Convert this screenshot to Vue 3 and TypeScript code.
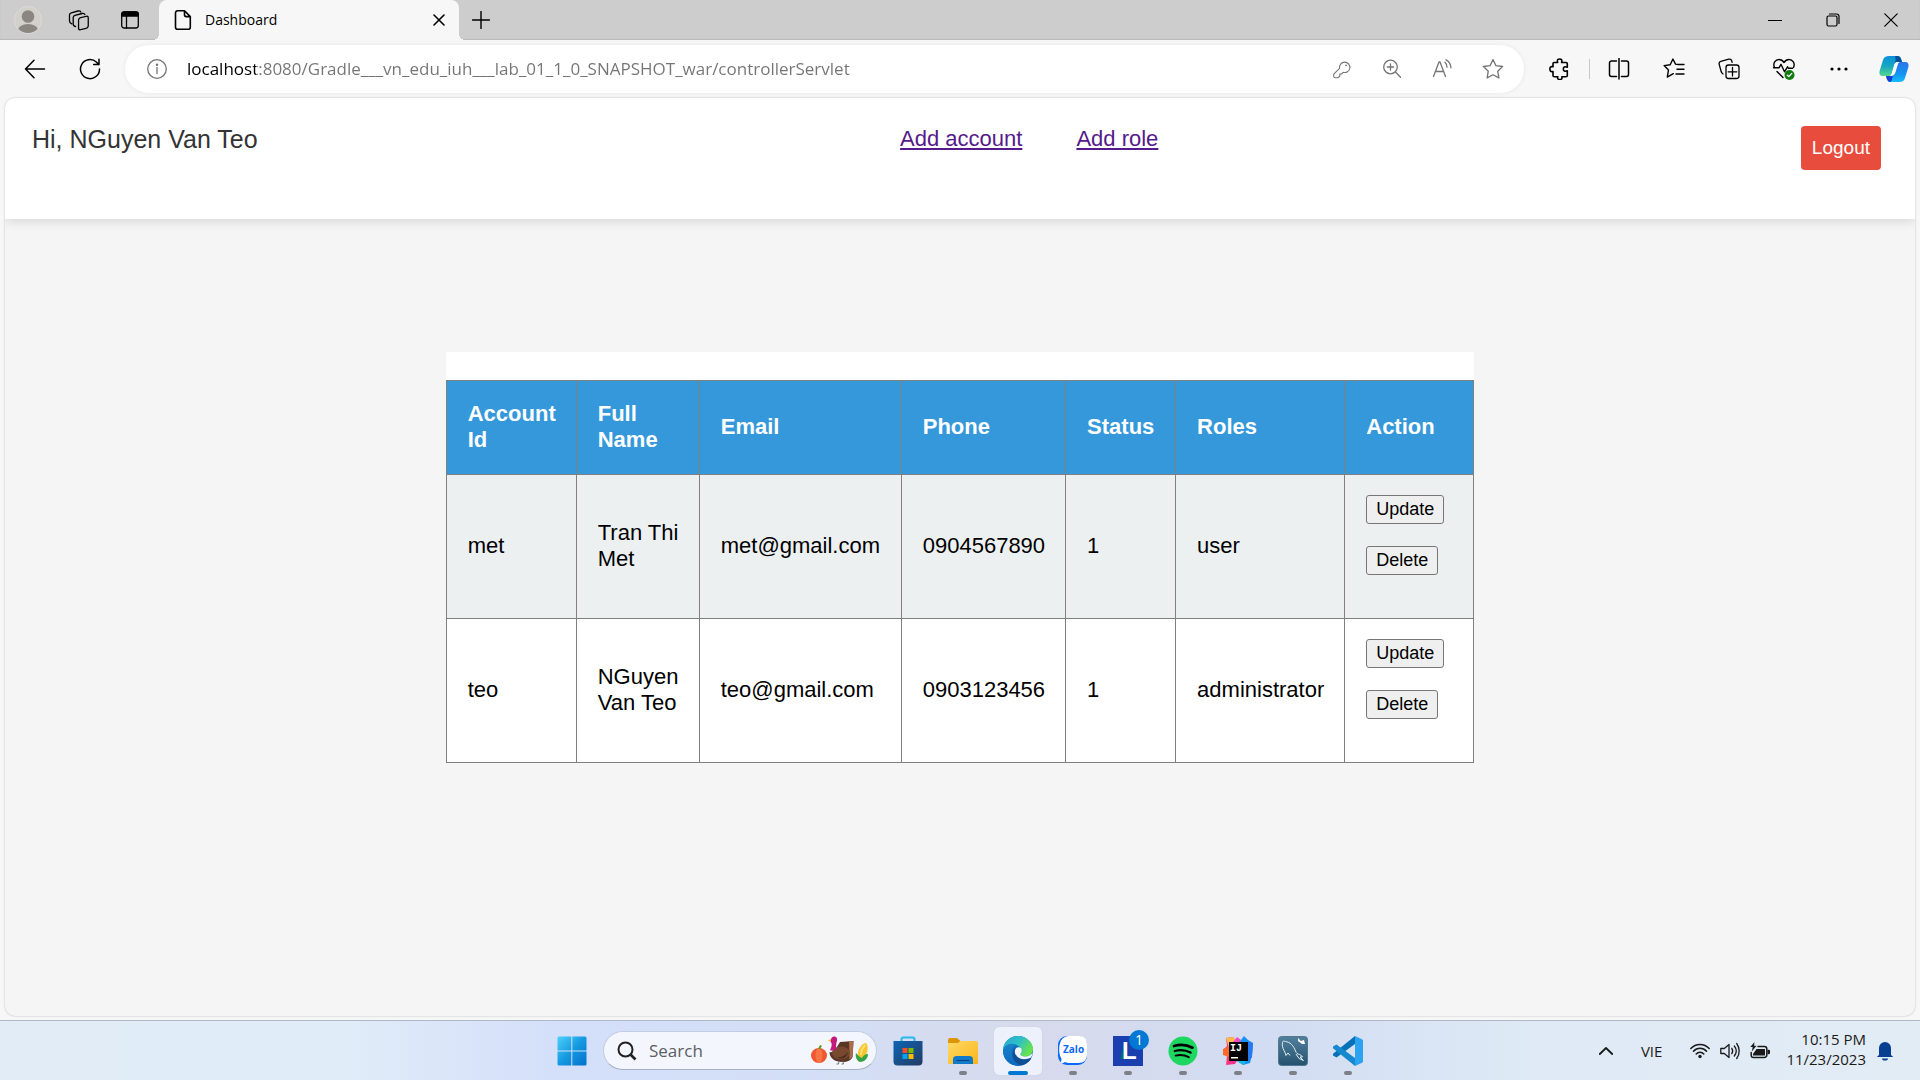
<script setup lang="ts">
import { ref } from 'vue'

interface Account {
  id: string
  fullName: string
  email: string
  phone: string
  status: number
  roles: string
}

const accounts: Account[] = [
  { id: 'met', fullName: 'Tran Thi Met', email: 'met@gmail.com', phone: '0904567890', status: 1, roles: 'user' },
  { id: 'teo', fullName: 'NGuyen Van Teo', email: 'teo@gmail.com', phone: '0903123456', status: 1, roles: 'administrator' },
]

const columns = [
  { label: 'Account Id', name: 'id' },
  { label: 'Full Name', name: 'name' },
  { label: 'Email', name: 'email' },
  { label: 'Phone', name: 'phone' },
  { label: 'Status', name: 'status' },
  { label: 'Roles', name: 'roles' },
  { label: 'Action', name: 'action' },
]

const address = ref('localhost:8080/Gradle___vn_edu_iuh___lab_01_1_0_SNAPSHOT_war/controllerServlet')
const query = ref('')
</script>

<template>
  <div class="desktop">
    <header class="titlebar">
      <button class="tool profile" aria-label="Profile">
        <svg width="28" height="28" viewBox="0 0 28 28">
          <defs><clipPath id="face"><circle cx="14" cy="14" r="13" /></clipPath></defs>
          <circle cx="14" cy="14" r="13.5" fill="#d3d0cc" stroke="#dedbd7" />
          <g clip-path="url(#face)" fill="#8b8682">
            <circle cx="14" cy="10.500" r="6.300" />
            <ellipse cx="14" cy="25" rx="10.500" ry="7" />
          </g>
        </svg>
      </button>
      <button class="tool" aria-label="Workspaces">
        <svg class="line" width="22" height="22" viewBox="0 0 22 22">
          <rect x="-5" y="-6" width="10" height="12" rx="2.200" transform="matrix(.97 -.25 0 1 15.400 14)" />
          <path d="M7.500 17.500c-1.500-.3-2.300-1-2.300-2.500V8.500c0-1.200.6-1.900 1.800-2.200L14 4.500c1.400-.3 2.300.1 2.900 1" />
          <path d="M3.800 14.800C2.300 14.300 1.500 13.500 1.500 12V6c0-1.200.6-1.900 1.800-2.200L10 2c1.400-.3 2.300.1 2.800 1" />
        </svg>
      </button>
      <button class="tool" aria-label="Tab actions menu">
        <svg class="line" width="20" height="20" viewBox="0 0 20 20">
          <rect x="1.700" y="2" width="16.600" height="16" rx="2.500" />
          <path d="M1.700 6V4.500A2.500 2.500 0 0 1 4.200 2h11.600a2.500 2.500 0 0 1 2.500 2.500V6z" fill="#000" />
          <path d="M6.500 6v12" />
        </svg>
      </button>
      <div class="tab">
        <svg class="line" width="20" height="20" viewBox="0 0 20 20">
          <path d="M4.500.8h7l5.800 5.800v10.600a2 2 0 0 1-2 2H4.500a2 2 0 0 1-2-2V2.800a2 2 0 0 1 2-2zM11.500.8v4a1.800 1.800 0 0 0 1.800 1.800h4" stroke-width="1.600" />
        </svg>
        <span class="tab-title">Dashboard</span>
        <button class="tab-close" aria-label="Close tab">
          <svg class="line" width="12" height="12" viewBox="0 0 12 12"><path d="M1 1l10 10M11 1L1 11" stroke-width="1.600" /></svg>
        </button>
      </div>
      <button class="tool new-tab" aria-label="New tab">
        <svg class="line" width="18" height="18" viewBox="0 0 18 18"><path d="M9 .5v17M.5 9h17" stroke-width="1.400" /></svg>
      </button>
      <div class="window-buttons">
        <button aria-label="Minimize">
          <svg class="line" width="14" height="14" viewBox="0 0 14 14"><path d="M.5 7.500h13" stroke-width="1.200" /></svg>
        </button>
        <button aria-label="Restore">
          <svg class="line" width="14" height="14" viewBox="0 0 14 14">
            <rect x="1" y="3" width="10" height="10" rx="1.500" stroke-width="1.200" />
            <path d="M3.500 1h7A2.500 2.500 0 0 1 13 3.500v7" stroke-width="1.200" />
          </svg>
        </button>
        <button aria-label="Close window">
          <svg class="line" width="14" height="14" viewBox="0 0 14 14"><path d="M.8.8l12.400 12.400M13.200.8L.8 13.200" stroke-width="1.200" /></svg>
        </button>
      </div>
    </header>

    <div class="toolbar">
      <button class="tool" aria-label="Back">
        <svg class="line" width="22" height="22" viewBox="0 0 22 22"><path d="M20.500 11H1.500M10 2.300L1.500 11l8.500 8.700" stroke-width="1.500" /></svg>
      </button>
      <button class="tool" aria-label="Refresh">
        <svg class="line" width="22" height="22" viewBox="0 0 22 22"><path d="M20.500 11A9.500 9.500 0 1 1 17.300 4L20 6.600M20 1.300v5.300h-5.300" stroke-width="1.500" /></svg>
      </button>
      <div class="address">
        <button aria-label="View site information">
          <svg class="line" width="20" height="20" viewBox="0 0 20 20"><circle cx="10" cy="10" r="9.300" /><path d="M10 8.500v6" /><circle cx="10" cy="5.800" r=".6" fill="currentColor" /></svg>
        </button>
        <input v-model="address" class="url" type="text" aria-label="Address bar" spellcheck="false" />
        <button aria-label="Passwords">
          <svg class="line" width="20" height="20" viewBox="0 0 20 20"><path d="M7.600 9.300a5.200 5.200 0 1 1 3.600 4L9.500 15H7.800v2l-1.900 1.800H3.200c-1 0-1.500-.5-1.500-1.500v-2.100z" stroke-width="1.100" /><circle cx="14" cy="6.300" r=".9" fill="currentColor" stroke="none" /></svg>
        </button>
        <button aria-label="Zoom">
          <svg class="line" width="20" height="20" viewBox="0 0 20 20"><circle cx="8.500" cy="8" r="6.800" /><path d="M13.500 13l5 5.200M8.500 4.800v6.400M5.300 8h6.400" /></svg>
        </button>
        <button aria-label="Read aloud">
          <svg class="line" width="20" height="20" viewBox="0 0 20 20"><path d="M1.500 17.500L7 3h1l5.500 14.500M3.300 12.500h8.400M13 3.200c1.500 1.400 2 3 2 5M14 .8c2.900 1.500 4.800 4.300 4.900 8" /></svg>
        </button>
        <button aria-label="Add to favorites">
          <svg class="line" width="22" height="22" viewBox="0 0 22 22"><path d="M11 1.500l2.900 6.100 6.700.9-4.900 4.700 1.200 6.700-5.900-3.200-5.900 3.200 1.200-6.700L1.400 8.500l6.700-.9z" /></svg>
        </button>
      </div>
      <div class="tool-pair">
        <button class="tool" aria-label="Extensions">
          <svg class="line" width="22" height="22" viewBox="0 0 22 22"><path d="M5 4.500h3.700C7.800 1.500 9 1 10.600 1s2.900.6 2 3.500H17c.8 0 1.300.5 1.300 1.300v3.400c-2.500-1-4-.1-4 1.800s1.500 2.800 4 1.800v4.700c0 .8-.5 1.300-1.300 1.300h-4.200c.7 2.300-.6 2.700-2 2.700s-2.700-.4-2-2.700H5.300c-.8 0-1.300-.5-1.300-1.300v-4C1.500 14 .900 12.700.9 11S1.500 8.200 4 8.800v-3c0-.8.300-1.300 1-1.300z" stroke-width="1.600" /></svg>
        </button>
        <span class="divider"></span>
        <button class="tool" aria-label="Split screen">
          <svg class="line" width="22" height="22" viewBox="0 0 22 22"><path d="M8.500 3h-5A2 2 0 0 0 1.500 5v11.500a2 2 0 0 0 2 2h5M13.500 3h5a2 2 0 0 1 2 2v11.500a2 2 0 0 1-2 2h-5M11 .5v20.500" stroke-width="1.500" /></svg>
        </button>
      </div>
      <button class="tool" aria-label="Favorites">
        <svg class="line" width="22" height="22" viewBox="0 0 22 22"><path d="M15.300 6.500l-2.800-.4L9.900 1 7.200 6.700l-6.100.9 4.400 4.300-1.200 7.200 6-3.400M15 6.500h6M14 11.200h7M13 16h8" stroke-width="1.400" /></svg>
      </button>
      <button class="tool" aria-label="Collections">
        <svg class="line" width="22" height="22" viewBox="0 0 22 22"><rect x="8" y="7" width="13" height="13.500" rx="2.500" /><path d="M14.500 9.500v8.500M10.200 13.800h8.600M5 16C3.800 15.300 3.300 14.300 3 13L1.200 6.300c-.4-1.500.2-2.500 1.600-2.900l8-2.200c1.500-.4 2.500.2 2.900 1.600l.4 1.500" /></svg>
      </button>
      <button class="tool" aria-label="Browser essentials">
        <svg class="line" width="24" height="24" viewBox="0 0 24 24"><path d="M2.500 10.500C.5 6 3.500 2.500 7 2.500c2 0 3.700 1 5 3 1.300-2 3-3 5-3 3.500 0 6.500 3.500 4.500 8M5 14.500l6 6M1.500 10.800h5.500l2-3.500 3.500 7.500 3-5 1 1.500h4" stroke-width="1.400" /><circle cx="17.500" cy="18" r="5" fill="#107c10" stroke="none" /><path d="M15.300 18.200l1.500 1.400 3-3.200" stroke="#fff" /></svg>
      </button>
      <button class="tool" aria-label="Settings and more">
        <svg width="22" height="22" viewBox="0 0 22 22"><circle cx="4" cy="11" r="1.600" /><circle cx="11" cy="11" r="1.600" /><circle cx="18" cy="11" r="1.600" /></svg>
      </button>
      <button class="tool" aria-label="Copilot">
        <svg width="30" height="28" viewBox="0 0 30 28">
          <defs>
            <linearGradient id="cpA" x1="0" y1="0" x2="0" y2="1"><stop offset="0" stop-color="#0a90dc" /><stop offset=".5" stop-color="#17a6c2" /><stop offset="1" stop-color="#55d790" /></linearGradient>
            <linearGradient id="cpB" x1="0" y1="0" x2="0" y2="1"><stop offset="0" stop-color="#2b74e8" /><stop offset=".6" stop-color="#1493f3" /><stop offset="1" stop-color="#13bdfc" /></linearGradient>
          </defs>
          <path d="M10 1h9c2 0 3 2 4 6h-4c-2 0-3 1-4 4l-2 7c-.8 2-1.500 3-3 3H4c-3 0-4-2-3.400-5L4 5c1-3 3-4 6-4z" fill="url(#cpA)" />
          <path d="M16 1h3c2 0 3 2 4 6h-4c-1.500 0-2.500.7-3.300 2C17 5 16.500 2 16 1z" fill="#07519c" />
          <path d="M20 27h-9c-2 0-3-2-4-6h4c2 0 3-1 4-4l2-7c.8-2 1.500-3 3-3h6c3 0 4 2 3.400 5L26 23c-1 3-3 4-6 4z" fill="url(#cpB)" />
          <path d="M11.500 27c-2.500 0-3.500-2-4.500-6h4c1.500 0 2.500-.7 3.200-2-1 4-1 6.500-2.700 8z" fill="#173fd4" />
          <path d="M18.800 7h-1.300c-1.300.4-2 1.800-2.600 4l-2 7c-.6 1.900-1.200 2.800-2.400 3h1.300c2.400-.2 3.800-1.200 4.500-3.200l2.300-7.500c.4-1.500 1-2.600 2.200-3.300z" fill="#fff" />
        </svg>
      </button>
    </div>

    <div class="viewport">
      <header class="page-header">
        <span class="greeting">Hi, NGuyen Van Teo</span>
        <nav class="links">
          <a href="#add-account">Add account</a>
          <a href="#add-role">Add role</a>
        </nav>
        <button class="logout" type="button">Logout</button>
      </header>
      <main class="page-main">
        <div class="card">
          <table>
            <colgroup>
              <col v-for="column in columns" :key="column.name" :class="'col-' + column.name" />
            </colgroup>
            <thead>
              <tr><th v-for="column in columns" :key="column.name" scope="col">{{ column.label }}</th></tr>
            </thead>
            <tbody>
              <tr v-for="account in accounts" :key="account.id">
                <td>{{ account.id }}</td>
                <td>{{ account.fullName }}</td>
                <td>{{ account.email }}</td>
                <td>{{ account.phone }}</td>
                <td>{{ account.status }}</td>
                <td>{{ account.roles }}</td>
                <td>
                  <form @submit.prevent><button type="submit">Update</button></form>
                  <form @submit.prevent><button type="submit">Delete</button></form>
                </td>
              </tr>
            </tbody>
          </table>
        </div>
      </main>
    </div>

    <footer class="taskbar">
      <div class="apps">
        <button class="app" aria-label="Start">
          <svg width="30" height="30" viewBox="0 0 30 30">
            <defs><linearGradient id="win" x1="0" y1="0" x2="1" y2="1"><stop offset="0" stop-color="#4fd0fb" /><stop offset=".5" stop-color="#1499e0" /><stop offset="1" stop-color="#0670cc" /></linearGradient></defs>
            <path d="M2 .5h12.300v14H.5V2A1.500 1.500 0 0 1 2 .5zM15.300.5H28A1.500 1.500 0 0 1 29.500 2v12.500H15.300zM.5 15.500h13.800v14H2A1.500 1.500 0 0 1 .5 28zM15.300 15.500h14.200V28a1.500 1.500 0 0 1-1.500 1.500H15.300z" fill="url(#win)" />
          </svg>
        </button>
        <label class="search">
          <svg width="20" height="20" viewBox="0 0 20 20" fill="none" stroke="#222" stroke-width="2"><circle cx="8.500" cy="8.500" r="7" /><path d="M13.500 13.500l5 5" stroke-width="2.600" /></svg>
          <input v-model="query" type="text" placeholder="Search" aria-label="Search" />
          <svg width="60" height="30" viewBox="0 0 60 30">
            <ellipse cx="9" cy="19.500" rx="8" ry="7.500" fill="#f0562f" />
            <ellipse cx="9" cy="19.500" rx="3.500" ry="7.500" fill="#f87545" />
            <path d="M8.500 13c0-2 .5-3 2-4l1.500 1c-1 1-1.500 2-1.500 3z" fill="#5b9a2a" />
            <path d="M30 6l13.500-1-1 16c-1 3-5 5-10 5-8 0-13-4-13-10 3 1 6-2 8-6z" fill="#5a3626" />
            <path d="M39 5.500l4.500-.5-1 16-3 2.500z" fill="#a86e4a" />
            <ellipse cx="31" cy="17" rx="9" ry="6.500" fill="#79492f" />
            <path d="M26 21c5 1 9-1 12-5-1 6-6 8-12 5z" fill="#4b2b20" />
            <path d="M21 4c0-2.500 1.800-4 4-3.500 2 .5 2.600 2.500 1.800 5-.7 2.500-1 4.500-.3 7.500-2 1.500-5 2-6.500 1 1.500-3 2-5 1.500-7l-1-1z" fill="#c3197d" />
            <path d="M21 3l-3 1.500 3 .7z" fill="#f5a623" />
            <path d="M29 25l-.5 3h-2M33 25l.5 3h-2" stroke="#777" fill="none" />
            <path d="M48 20c-1-6 3-12 8-13 3 3 2 11-3 16z" fill="#f8c52c" />
            <path d="M51 19c0-4 2-8 4.500-10" stroke="#fbe177" fill="none" stroke-width="2" />
            <path d="M46 17c2 2 3 4 6 5 1-2 3-4 6-4 0 4-3 8-8 8-3-1-5-5-4-9z" fill="#36a244" />
          </svg>
        </label>
        <button class="app" aria-label="Microsoft Store">
          <svg width="30" height="30" viewBox="0 0 30 30">
            <defs><linearGradient id="store" x1="0" y1="0" x2="1" y2="1"><stop offset="0" stop-color="#0b66b5" /><stop offset="1" stop-color="#243a63" /></linearGradient></defs>
            <path d="M8.500 6V3.200A1.700 1.700 0 0 1 10.200 1.500h9.600a1.700 1.700 0 0 1 1.700 1.700V6" fill="none" stroke="#25b9ed" stroke-width="2" />
            <path d="M.5 5h29v20.500a4 4 0 0 1-4 4h-21a4 4 0 0 1-4-4z" fill="url(#store)" />
            <path d="M9.500 12h5v5h-5z" fill="#f25022" /><path d="M15.500 12h5v5h-5z" fill="#7fba00" /><path d="M9.500 18h5v5h-5z" fill="#00a4ef" /><path d="M15.500 18h5v5h-5z" fill="#ffb900" />
          </svg>
        </button>
        <button class="app running" aria-label="File Explorer">
          <svg width="30" height="30" viewBox="0 0 30 30">
            <defs><linearGradient id="folder" x1="0" y1="0" x2="1" y2="1"><stop offset="0" stop-color="#ffd964" /><stop offset="1" stop-color="#f9b51b" /></linearGradient></defs>
            <path d="M0 4a2 2 0 0 1 2-2h7l4 3.500v6H0z" fill="#dc9708" />
            <path d="M0 7h10l2.500-2H28a2 2 0 0 1 2 2v21H0z" fill="url(#folder)" />
            <path d="M5 28v-4.500A3.500 3.500 0 0 1 8.500 20h13a3.500 3.500 0 0 1 3.500 3.500V28z" fill="#1179ca" /><path d="M8.500 24.500h13" stroke="#063d84" />
          </svg>
        </button>
        <button class="app running active" aria-label="Microsoft Edge">
          <svg width="32" height="32" viewBox="0 0 32 32">
            <defs>
              <linearGradient id="edA" x1="0" y1="0" x2="1" y2=".5"><stop offset="0" stop-color="#2aa7d9" /><stop offset=".55" stop-color="#2fc0c4" /><stop offset="1" stop-color="#66e34c" /></linearGradient>
              <linearGradient id="edB" x1="0" y1="0" x2="0" y2="1"><stop offset="0" stop-color="#1783ca" /><stop offset="1" stop-color="#0d69be" /></linearGradient>
            </defs>
            <circle cx="16" cy="16" r="15" fill="#0d6ebd" />
            <path d="M1 15C1 7 8 1 16 1s15 6 15 13c0 5-4 7.500-8 7.500-3.500 0-5-1.300-4.500-2.700 1.500-2 1.500-4.300-.2-6C13 7 4 8 1 15z" fill="url(#edA)" />
            <path d="M1 15c3-6 9-7.500 13.500-5-3.500 1-5.500 5-4.500 10 .9 5 5 9 10.500 10C10 33 1 25 1 15z" fill="url(#edB)" />
            <path d="M14 13c-2.500 1-4 4-3.500 8 .6 5 5 9 10 9.300 3.500-1 6.500-3.500 8.500-6.500.3-.6-.2-1-1-.6C22 26 14 24 13 18c-.2-2 .2-4 1-5z" fill="#114f94" />
            <path d="M19 13c-2-1.500-5-.8-6 2-1 4 2 8 7 9 3 .5 6 0 9-1.500.8-1.500 1.500-3 1.700-5C28.500 21 25 21.500 23 21.500c-3.500 0-5-1.300-4.500-2.700 1.500-1.800 1.800-4 .5-5.800z" fill="#f0f4fb" />
            <path d="M13.200 19c1.500 5 8 7.500 15.800 4.300l-3 3.700-8-1z" fill="#114f94" />
          </svg>
        </button>
        <button class="app running" aria-label="Zalo">
          <svg width="32" height="32" viewBox="0 0 32 32">
            <rect x="1" y="1" width="29" height="29" rx="9" fill="#0a68ff" />
            <path d="M13 1h9c5 0 8 3 8 8v10c0 6-3 9-9 9h-8c-2 0-4-.5-5-1-1 1-3 1.300-5 .5 1.500-1 1.700-2.500 1.300-4C1 18 1 5 8 2c1.500-.7 3-1 5-1z" fill="#fff" />
            <text x="6" y="18" font-family="Open Sans, sans-serif" font-size="10" font-weight="700" fill="#0a68ff">Zalo</text>
          </svg>
        </button>
        <button class="app running" aria-label="Lingoes">
          <svg width="30" height="30" viewBox="0 0 30 30">
            <path d="M0 0h30v30H0z" fill="#1b3fae" /><path d="M11 7l-4 16h5z" fill="#0c6874" />
            <text x="9" y="23" font-family="Liberation Sans, sans-serif" font-size="24" font-weight="700" fill="#fff">L</text>
          </svg>
          <span class="badge">1</span>
        </button>
        <button class="app running" aria-label="Spotify">
          <svg width="30" height="30" viewBox="0 0 30 30">
            <circle cx="15" cy="15" r="14.500" fill="#1ed760" />
            <g fill="none" stroke="#000" stroke-linecap="round"><path d="M6 10c6.500-2 13-1.300 18.500 1.700" stroke-width="2.700" /><path d="M6.800 15c5.500-1.600 11-1 15.800 1.600" stroke-width="2.300" /><path d="M7.500 19.600c4.500-1.200 9-.8 13.300 1.600" stroke-width="1.900" /></g>
          </svg>
        </button>
        <button class="app running" aria-label="IntelliJ IDEA">
          <svg width="30" height="30" viewBox="0 0 30 30">
            <path d="M3 2l7-1 5 6-2 16-10 6 1-9-4-6 4-4z" fill="#fd3d6b" /><path d="M3 2l7-1 5 5-9 6z" fill="#ffb94f" /><path d="M0 13l8-3 1 12-9-3z" fill="#ff6a2c" />
            <path d="M10 6l4-5 4 3-1 6z" fill="#ef4cc4" /><path d="M18 4l3-4 4 4 5 3-1 12-2 8-7 2-6-4-2-6z" fill="#1591f5" /><path d="M25 6l5 1-1 14-4 5z" fill="#2578f0" /><path d="M12 24l6-2 5 2-2 5z" fill="#16b9e8" />
            <path d="M3 29l6-6 6 0-3 5z" fill="#fb2f92" /><path d="M6 6h19v19H6z" />
            <text x="7" y="15" font-family="Liberation Mono, monospace" font-size="10" font-weight="700" fill="#fff">IJ</text><path d="M8 21h7v1.500H8z" fill="#fff" />
          </svg>
        </button>
        <button class="app running" aria-label="MySQL Workbench">
          <svg width="30" height="30" viewBox="0 0 30 30">
            <defs><linearGradient id="sql" x1="0" y1="0" x2="0" y2="1"><stop offset="0" stop-color="#527f9d" /><stop offset="1" stop-color="#24536f" /></linearGradient></defs>
            <rect x=".5" y=".5" width="29" height="29" rx="3" fill="url(#sql)" stroke="#52788e" />
            <path d="M8 19.500c-.5-2-1-3.500-2-5-1.500-3-2-5.500-1.500-8C4.500 5 6 4.800 7.500 5.500c4.500.5 8 4 10 9.500.8 2.200 2 3 4 3.500 1.500.5 2.500 1.300 3 2.500h-2.500l3.500 3.500-4.500-2-3-4.500M8 19.500l2-2.500 2 2.500" fill="none" stroke="#e3edf3" />
            <path d="M20 2l3 3 3-1 1 4-3 0-4-3z" fill="#fff" />
          </svg>
        </button>
        <button class="app running" aria-label="Visual Studio Code">
          <svg width="30" height="30" viewBox="0 0 30 30">
            <path d="M22 0v8L3.500 21.500 0 19.500v-1.800z" fill="#0872b9" /><path d="M22 30v-8L3.500 8.500 0 10.500v1.800z" fill="#1688d0" /><path d="M22 0l6.500 3a2 2 0 0 1 1.500 2v20a2 2 0 0 1-1.500 2L22 30z" fill="#2ba3f0" />
          </svg>
        </button>
      </div>
      <div class="tray">
        <button aria-label="Show hidden icons"><svg class="line" width="14" height="14" viewBox="0 0 14 14"><path d="M.8 10L7 4l6.200 6" stroke-width="1.800" /></svg></button>
        <button class="lang">VIE</button>
        <button class="status" aria-label="Network, volume and battery">
          <svg class="line" width="20" height="16" viewBox="0 0 20 16"><path d="M.8 5.500c5-5.500 13.400-5.500 18.400 0M3.500 8.300c3.500-4 9.500-4 13 0M6.200 11c2-2.400 5.600-2.400 7.600 0" stroke-width="1.500" /><circle cx="10" cy="13.500" r="1.700" fill="currentColor" stroke="none" /></svg>
          <svg class="line" width="20" height="18" viewBox="0 0 20 18"><path d="M.8 6.500h3.500L9 2.500v13l-4.700-4H.8zM11.800 6.300c1 1.500 1 3.900 0 5.400M14.300 4c2.400 3 2.400 7 0 10M16.700 1.500c3.300 4.500 3.300 10.500 0 15" /></svg>
          <svg class="line" width="20" height="18" viewBox="0 0 20 18"><path d="M8 4.500h6.500a2.300 2.300 0 0 1 2.300 2.300v6.400a2.300 2.300 0 0 1-2.300 2.300h-11a2.300 2.300 0 0 1-2.300-2.300v-2.700" stroke-width="1.500" /><path d="M6.500 7H15v6.500H3V12zM17.500 7.800h1.300c.7 0 1.200.5 1.200 1.200v2c0 .7-.5 1.200-1.200 1.200h-1.300z" fill="currentColor" stroke="none" /><path d="M4.500 0L.3 5h2.400L1.800 9.500 6.500 3.800H4z" fill="currentColor" stroke="none" /></svg>
        </button>
        <time class="clock" datetime="2023-11-23T22:15">10:15 PM<br />11/23/2023</time>
        <button aria-label="Notifications"><svg width="16" height="20" viewBox="0 0 16 20" fill="#083f91"><path d="M2 14V7a6 6 0 0 1 12 0v7l2 1.800V16H0v-.2zM5 17.500h6a3 2 0 0 1-6 0z" /></svg></button>
      </div>
    </footer>
  </div>
</template>

<style>
body {
  margin: 0;
}
</style>

<style scoped>
.desktop {
  display: flex;
  flex-direction: column;
  min-height: 100vh;
  background: #f7f7f7;
  font-family: "Open Sans", sans-serif;
  color: #000;
}

button {
  font-family: inherit;
}

svg {
  flex: none;
  display: block;
}

.line {
  fill: none;
  stroke: currentColor;
  stroke-width: 1.3;
  stroke-linecap: round;
  stroke-linejoin: round;
}

.titlebar button,
.toolbar button,
.taskbar button {
  display: flex;
  align-items: center;
  justify-content: center;
  padding: 0;
  border: 0;
  background: none;
  color: inherit;
}

/* Browser frame */
.titlebar {
  display: flex;
  height: 40px;
  padding-left: 2px;
  background: #cdcdcd;
  box-shadow: inset 0 -1px 1px #b8b8b8;
}

.titlebar .tool {
  width: 51px;
}

.tab {
  position: relative;
  display: flex;
  flex: 0 1 300px;
  align-items: center;
  gap: 12px;
  box-sizing: border-box;
  margin-left: 4px;
  padding: 0 12px 0 14px;
  border-radius: 8px 8px 0 0;
  background: #f7f7f7;
}

.tab::before,
.tab::after {
  content: "";
  position: absolute;
  bottom: 0;
  width: 6px;
  height: 6px;
}

.tab::before {
  right: 100%;
  background: radial-gradient(circle at 0 0, transparent 6px, #f7f7f7 6px);
}

.tab::after {
  left: 100%;
  background: radial-gradient(circle at 100% 0, transparent 6px, #f7f7f7 6px);
}

.tab-title {
  flex: 1;
  font-size: 14px;
  line-height: 20px;
}

.titlebar .tab-close {
  width: 16px;
  height: 20px;
}

.titlebar .new-tab {
  width: 44px;
}

.window-buttons {
  display: flex;
  margin-left: auto;
}

.window-buttons button {
  width: 58px;
}

.toolbar {
  display: flex;
  align-items: center;
  gap: 9px;
  height: 57px;
  padding: 0 3px 0 12px;
}

.toolbar .tool {
  width: 46px;
  height: 40px;
}

.tool-pair {
  display: flex;
  align-items: center;
  gap: 6px;
}

.divider {
  width: 1px;
  height: 20px;
  background: #c8c8c8;
}

.address {
  display: flex;
  flex: 1;
  align-items: center;
  gap: 30px;
  height: 48px;
  margin: 0 4px 0 3px;
  padding: 0 20px 0 22px;
  border-radius: 24px;
  background: #fff;
  box-shadow: 0 0 4px #e6e6e6;
  color: #747474;
}

.url {
  flex: 1;
  min-width: 0;
  margin-left: -10px;
  padding: 0;
  border: 0;
  outline: 0;
  background: linear-gradient(to right, #000 69px, #747474 69px);
  -webkit-background-clip: text;
  background-clip: text;
  -webkit-text-fill-color: transparent;
  color: #747474;
  font: 17px/24px "Open Sans", sans-serif;
}

/* Web page */
.viewport {
  display: flex;
  flex: 1;
  flex-direction: column;
  overflow: hidden;
  margin: 1px 5px 4px;
  border-radius: 10px;
  background: #f5f5f5;
  box-shadow: 0 0 2px #b4b4b4;
  font-family: Arial, "Liberation Sans", sans-serif;
}

.page-header {
  display: flex;
  align-items: flex-start;
  justify-content: space-between;
  box-sizing: border-box;
  height: 121px;
  padding: 28px 34px 28px 27px;
  background: #fff;
  box-shadow: 0 2px 10px #d4d4d4;
}

.greeting {
  color: #333;
  font-size: 25px;
  line-height: 26px;
}

.links {
  display: flex;
  gap: 54px;
  font-size: 22px;
  line-height: 26px;
}

.links a {
  color: #551a8b;
}

.logout {
  padding: 11px;
  border: 0;
  border-radius: 4px;
  background: #e74c3c;
  color: #fff;
  font-size: 19px;
  line-height: 22px;
}

.page-main {
  display: flex;
  justify-content: center;
  padding: 133px 28px 28px;
}

.card {
  padding-top: 28px;
  background: #fff;
}

table {
  border-collapse: collapse;
  font-size: 22px;
  line-height: 26px;
}

.col-id { width: 130px; }
.col-name { width: 123px; }
.col-email { width: 202px; }
.col-phone { width: 164px; }
.col-status { width: 110px; }
.col-roles { width: 169px; }
.col-action { width: 129px; }

th,
td {
  padding: 20px 20px 21px 21px;
  border: 1px solid #808080;
  text-align: left;
}

th {
  background: #3498db;
  color: #fff;
}

tbody tr:nth-child(odd) {
  background: #ecf0f1;
}

tbody tr:nth-child(even) {
  background: #fff;
}

td form {
  margin-bottom: 22px;
}

td button {
  display: block;
  padding: 3px 9px;
  border: 1px solid #767676;
  border-radius: 3px;
  background: #efefef;
  color: #000;
  font-size: 18px;
  line-height: 21px;
}

/* Desktop taskbar */
.taskbar {
  display: grid;
  grid-template-columns: 1fr auto 1fr;
  align-items: center;
  box-sizing: border-box;
  height: 60px;
  border-top: 1px solid #afb8c5;
  background: linear-gradient(to right, #e1ecf6 0, #e0ecf8 18%, #d4dffa 29%, #d3dff6 42%, #d7daec 54%, #d2dcf2 66%, #dfeaf6 80%, #e2ecf5 100%);
}

.apps {
  display: flex;
  grid-column: 2;
  align-items: center;
  gap: 7px;
}

.taskbar .app {
  position: relative;
  width: 48px;
  height: 48px;
  border-radius: 5px;
}

.running::after {
  content: "";
  position: absolute;
  bottom: 0;
  left: 20px;
  width: 8px;
  height: 4px;
  border-radius: 2px;
  background: #7d8086;
}

.taskbar .active {
  background: #edf1fb;
  box-shadow: 0 0 1px #b4bccb;
}

.active::after {
  left: 14px;
  width: 20px;
  background: #0078d4;
}

.badge {
  position: absolute;
  top: 3px;
  right: 3px;
  width: 20px;
  height: 20px;
  border-radius: 10px;
  background: #0078d4;
  color: #fff;
  font-size: 14px;
  line-height: 20px;
  text-align: center;
}

.search {
  display: flex;
  align-items: center;
  gap: 12px;
  box-sizing: border-box;
  width: 274px;
  height: 39px;
  padding: 0 6px 0 13px;
  border: 1px solid #c3cde2;
  border-bottom-color: #a7b0c3;
  border-radius: 20px;
  background: #f3f6fd;
}

.search input {
  flex: 1;
  min-width: 0;
  padding: 0;
  border: 0;
  outline: 0;
  background: none;
  font: 17px/24px "Open Sans", sans-serif;
}

.search input::placeholder {
  color: #5c5e63;
  opacity: 1;
}

.tray {
  display: flex;
  align-items: center;
  justify-content: flex-end;
  padding-right: 27px;
  color: #1a1a1a;
  font-size: 15px;
  line-height: 20px;
}

.taskbar .lang {
  margin: 0 28px;
  font-size: 15px;
}

.taskbar .status {
  gap: 10px;
}

.clock {
  margin: 0 11px 0 16px;
  padding-bottom: 4px;
  text-align: right;
}
</style>
